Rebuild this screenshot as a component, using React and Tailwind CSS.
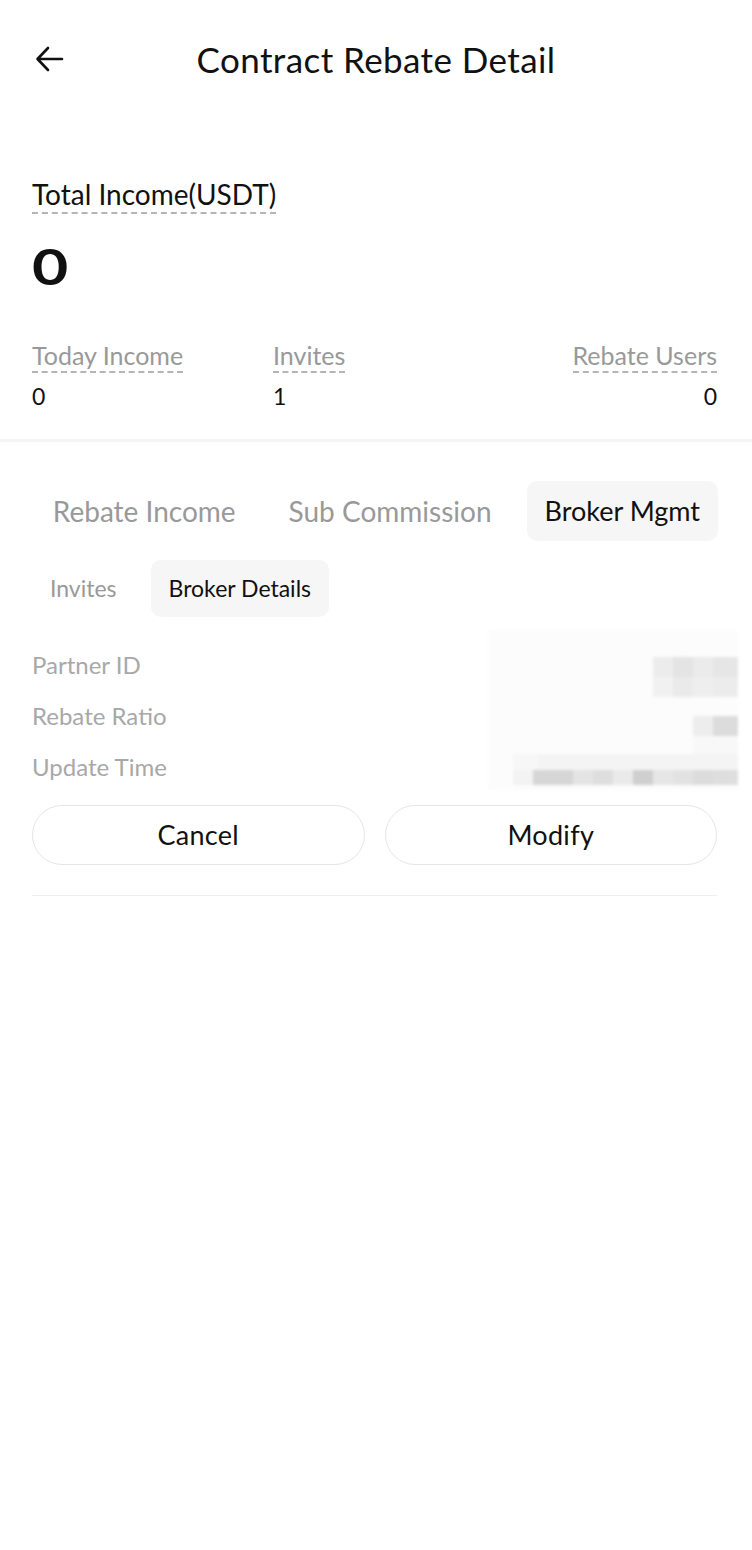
import React from 'react'

const font = { fontFamily: '"Lato", "Noto Sans", sans-serif' }

function BackArrow() {
  return (
    <svg width="30" height="26" viewBox="0 0 30 26" fill="none">
      <path
        d="M27 13H3M13 2L2.5 13L13 24"
        stroke="#111"
        strokeWidth="2.6"
        strokeLinecap="round"
        strokeLinejoin="round"
      />
    </svg>
  )
}

function Dashed({ children, className = '' }) {
  return (
    <span
      className={`border-b-2 border-dashed border-[#b5b5b5] pb-[1px] ${className}`}
    >
      {children}
    </span>
  )
}

function Stat({ label, value, align = 'left' }) {
  return (
    <div className={`flex flex-col ${align === 'right' ? 'items-end' : 'items-start'}`}>
      <Dashed className="text-[25px] leading-[30px] text-[#999]">{label}</Dashed>
      <span className="mt-[10px] text-[23px] leading-[26px] text-[#111]">{value}</span>
    </div>
  )
}

function Blur() {
  return (
    <div className="flex flex-col items-end blur-[1.5px] bg-[#fcfcfc] w-[250px] h-[160px] pt-[27px]">
      <div className="flex">
        <div className="w-[20px] h-[20px] bg-[#ececec]" />
        <div className="w-[20px] h-[20px] bg-[#e4e4e4]" />
        <div className="w-[20px] h-[20px] bg-[#ebebeb]" />
        <div className="w-[25px] h-[20px] bg-[#e6e6e6]" />
      </div>
      <div className="flex">
        <div className="w-[20px] h-[20px] bg-[#f1f1f1]" />
        <div className="w-[20px] h-[20px] bg-[#eaeaea]" />
        <div className="w-[20px] h-[20px] bg-[#eeeeee]" />
        <div className="w-[25px] h-[20px] bg-[#ececec]" />
      </div>
      <div className="flex mt-[19px]">
        <div className="w-[20px] h-[20px] bg-[#ededed]" />
        <div className="w-[25px] h-[20px] bg-[#dcdcdc]" />
      </div>
      <div className="flex">
        <div className="w-[45px] h-[18px] bg-[#f8f8f8]" />
      </div>
      <div className="flex">
        <div className="w-[25px] h-[16px] bg-[#f7f7f7]" />
        <div className="w-[200px] h-[16px] bg-[#f4f4f4]" />
      </div>
      <div className="flex">
        <div className="w-[20px] h-[15px] bg-[#f3f3f3]" />
        <div className="w-[40px] h-[15px] bg-[#d6d6d6]" />
        <div className="w-[20px] h-[15px] bg-[#e4e4e4]" />
        <div className="w-[20px] h-[15px] bg-[#dedede]" />
        <div className="w-[20px] h-[15px] bg-[#eaeaea]" />
        <div className="w-[20px] h-[15px] bg-[#cfcfcf]" />
        <div className="w-[20px] h-[15px] bg-[#e6e6e6]" />
        <div className="w-[20px] h-[15px] bg-[#e2e2e2]" />
        <div className="w-[20px] h-[15px] bg-[#dcdcdc]" />
        <div className="w-[25px] h-[15px] bg-[#dedede]" />
      </div>
    </div>
  )
}

export default function App() {
  return (
    <div className="w-[752px] h-[1550px] bg-white text-[#111]" style={font}>
      <header className="grid grid-cols-[100px_1fr_100px] items-center h-[118px]">
        <div className="pl-[35px] flex items-center">
          <BackArrow />
        </div>
        <h1 className="text-center text-[35px] leading-[40px] font-normal tracking-[0.4px]">
          Contract Rebate Detail
        </h1>
        <div />
      </header>

      <section className="pl-8 pr-[35px] pt-[59px] pb-[30px] border-b-[3px] border-[#f4f4f4]">
        <div>
          <Dashed className="text-[28px] leading-[35px]">Total Income(USDT)</Dashed>
        </div>
        <div className="mt-[26px] text-[50px] leading-[56px] font-bold">
          <span className="inline-block scale-x-[1.25] origin-left">0</span>
        </div>
        <div className="mt-[46px] grid grid-cols-[241px_1fr_auto]">
          <Stat label="Today Income" value="0" />
          <Stat label="Invites" value="1" />
          <Stat label="Rebate Users" value="0" align="right" />
        </div>
      </section>

      <nav className="flex items-center mt-[39px] pr-[34px] justify-end whitespace-nowrap text-[28px]">
        <span className="text-[#999]">Rebate Income</span>
        <span className="text-[#999] ml-[53px]">Sub Commission</span>
        <span className="ml-[35px] bg-[#f6f6f6] rounded-[10px] px-[18px] h-[60px] flex items-center text-[27px]">
          Broker Mgmt
        </span>
      </nav>

      <div className="flex items-center mt-[19px] pl-[32px] gap-[16px] text-[23px]">
        <span className="text-[#999] px-[18px]">Invites</span>
        <span className="bg-[#f6f6f6] rounded-[10px] px-[18px] h-[57px] flex items-center">
          Broker Details
        </span>
      </div>

      <div className="flex justify-between pl-8 pr-[14px] mt-[13px]">
        <div className="flex flex-col gap-[26px] pt-[22px] text-[24px] leading-[25px] text-[#a8a8a8]">
          <span>Partner ID</span>
          <span>Rebate Ratio</span>
          <span>Update Time</span>
        </div>
        <Blur />
      </div>

      <div className="pl-8 pr-[35px] mt-[15px] grid grid-cols-2 gap-[20px]">
        <button className="h-[60px] rounded-full border border-[#e6e6e6] text-[27px] tracking-[0.3px]">
          Cancel
        </button>
        <button className="h-[60px] rounded-full border border-[#e6e6e6] text-[27px] tracking-[0.3px]">
          Modify
        </button>
      </div>

      <div className="ml-8 mr-[35px] mt-[30px] border-t border-[#efefef]" />
    </div>
  )
}
